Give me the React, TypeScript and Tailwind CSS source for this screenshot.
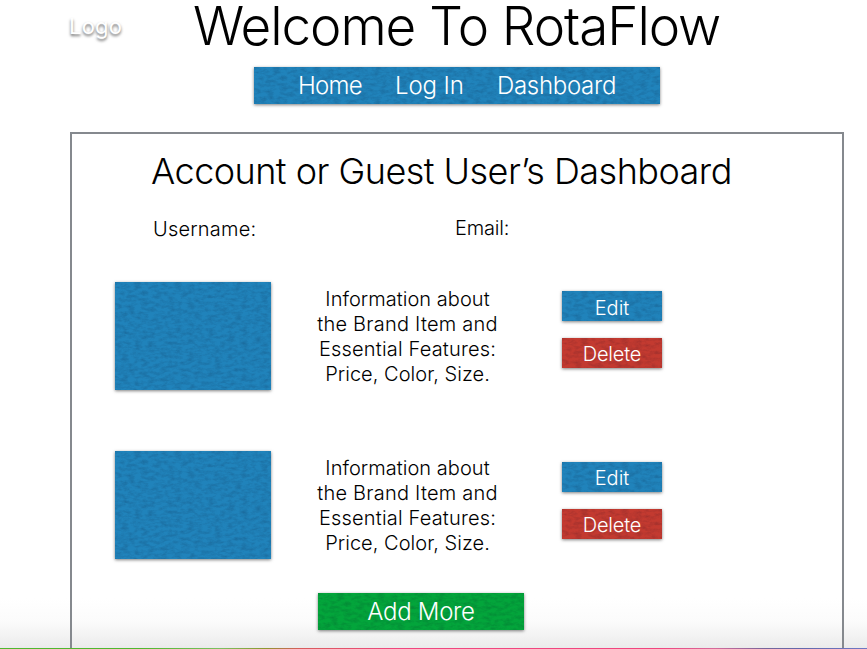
import type { ReactNode } from "react";

// Paper-like grain laid over the coloured surfaces.
function Grain({ id }: { id: string }) {
  return (
    <svg className="pointer-events-none absolute inset-0 h-full w-full" aria-hidden="true">
      <filter id={id} x="0" y="0" width="100%" height="100%" colorInterpolationFilters="sRGB">
        <feTurbulence type="fractalNoise" baseFrequency="0.15 0.3" numOctaves={4} seed={4} />
        <feColorMatrix values="0 0 0 0 0  0 0 0 0 0  0 0 0 0 0.1  0.3 0 0 0 -0.11" />
      </filter>
      <rect width="100%" height="100%" filter={`url(#${id})`} />
    </svg>
  );
}

function Surface({ id, className, children }: { id: string; className: string; children?: ReactNode }) {
  return (
    <div className={`relative shrink-0 shadow-[0_1px_3px_rgba(0,0,0,0.5)] ${className}`}>
      <Grain id={id} />
      {children}
    </div>
  );
}

function Item({ id, gap, editPad }: { id: string; gap: string; editPad: string }) {
  return (
    <div className="flex h-[108px] items-start">
      <Surface id={`${id}-photo`} className="h-[108px] w-[156px] bg-[#2083bb]" />
      <p className="ml-[36px] mt-[5px] w-[201px] text-center text-[20px] leading-[25px] whitespace-nowrap">
        <span className="tracking-[0.04px]">Information about</span>
        <br />
        <span className="tracking-[0.23px]">the Brand Item and</span>
        <br />
        <span className="tracking-[0.17px]">Essential Features:</span>
        <br />
        <span className="tracking-[0.04px]">Price, Color, Size.</span>
      </p>
      <div className={`ml-[54px] flex flex-col gap-[17px] text-[20px] font-[260] text-white ${gap}`}>
        <Surface id={`${id}-edit`} className="h-[30px] w-[100px] bg-[#2083bb]">
          <button className={`relative block w-full text-center leading-[30px] ${editPad}`}>Edit</button>
        </Surface>
        <Surface id={`${id}-delete`} className="h-[30px] w-[100px] bg-[#c33a30]">
          <button className="relative block w-full pt-px text-center leading-[30px] tracking-[-0.2px]">Delete</button>
        </Surface>
      </div>
    </div>
  );
}

export default function App() {
  return (
    <div className="flex h-[649px] w-[867px] flex-col overflow-hidden bg-[linear-gradient(to_bottom,#fff_598px,#fbfbfb_622px,#ebebeb_648px)] font-['Inter','Liberation_Sans',sans-serif] font-light text-black">
      <header className="flex h-[132px] shrink-0">
        <div className="w-[194px] shrink-0 pl-[69px] pt-[12px] text-[22px] leading-[28px] font-normal tracking-[0.2px] text-white [text-shadow:0_2px_3px_rgba(0,0,0,0.6)]">
          Logo
        </div>
        <div className="w-[530px] shrink-0">
          <h1 className="-ml-px h-[67px] text-[53px] leading-[52px] tracking-[-1.05px] whitespace-nowrap">Welcome To RotaFlow</h1>
          <Surface id="nav" className="ml-[60px] h-[37px] w-[406px] bg-[#2083bb]">
            <nav className="relative flex pl-[44px] text-[24px] leading-[38px] font-[260] tracking-[-0.3px] whitespace-nowrap text-white">
              <a className="w-[97px] tracking-[-0.7px]">Home</a>
              <a className="w-[102px] tracking-[-0.1px]">Log In</a>
              <a>Dashboard</a>
            </nav>
          </Surface>
        </div>
      </header>
      <main className="ml-[70px] h-[516px] w-[774px] shrink-0 border-2 border-b-0 border-[#85898e]">
        <h2 className="ml-[79px] mt-[14px] h-[49px] text-[36px] leading-[46px] tracking-[-0.53px] whitespace-nowrap">
          Account or Guest User’s Dashboard
        </h2>
        <div className="ml-[81px] mt-[18px] flex h-[30px] text-[20px] leading-[28px]">
          <span className="w-[302px] tracking-[0.2px]">Username:</span>
          <span className="-mt-px tracking-[-0.2px]">Email:</span>
        </div>
        <section className="ml-[43px] mt-[37px] flex flex-col gap-[61px]">
          <Item id="first" gap="mt-[9px]" editPad="pt-[2px]" />
          <Item id="second" gap="mt-[11px]" editPad="pt-px" />
        </section>
        <Surface id="add" className="ml-[246px] mt-[34px] h-[37px] w-[206px] bg-[#03a53b]">
          <button className="relative block w-full text-center text-[24px] leading-[38px] font-[260] tracking-[-0.3px] text-white">Add More</button>
        </Surface>
      </main>
      <div className="h-px shrink-0 bg-[linear-gradient(to_right,#4fb82e_0px,#4fb82e_140px,#7cc060_220px,#8c9830_265px,#d85c5c_300px,#f0457f_400px,#f0457f_660px,#d66a9a_715px,#77659a_765px,#6468ab_800px,#7078c4_867px)]" />
    </div>
  );
}
